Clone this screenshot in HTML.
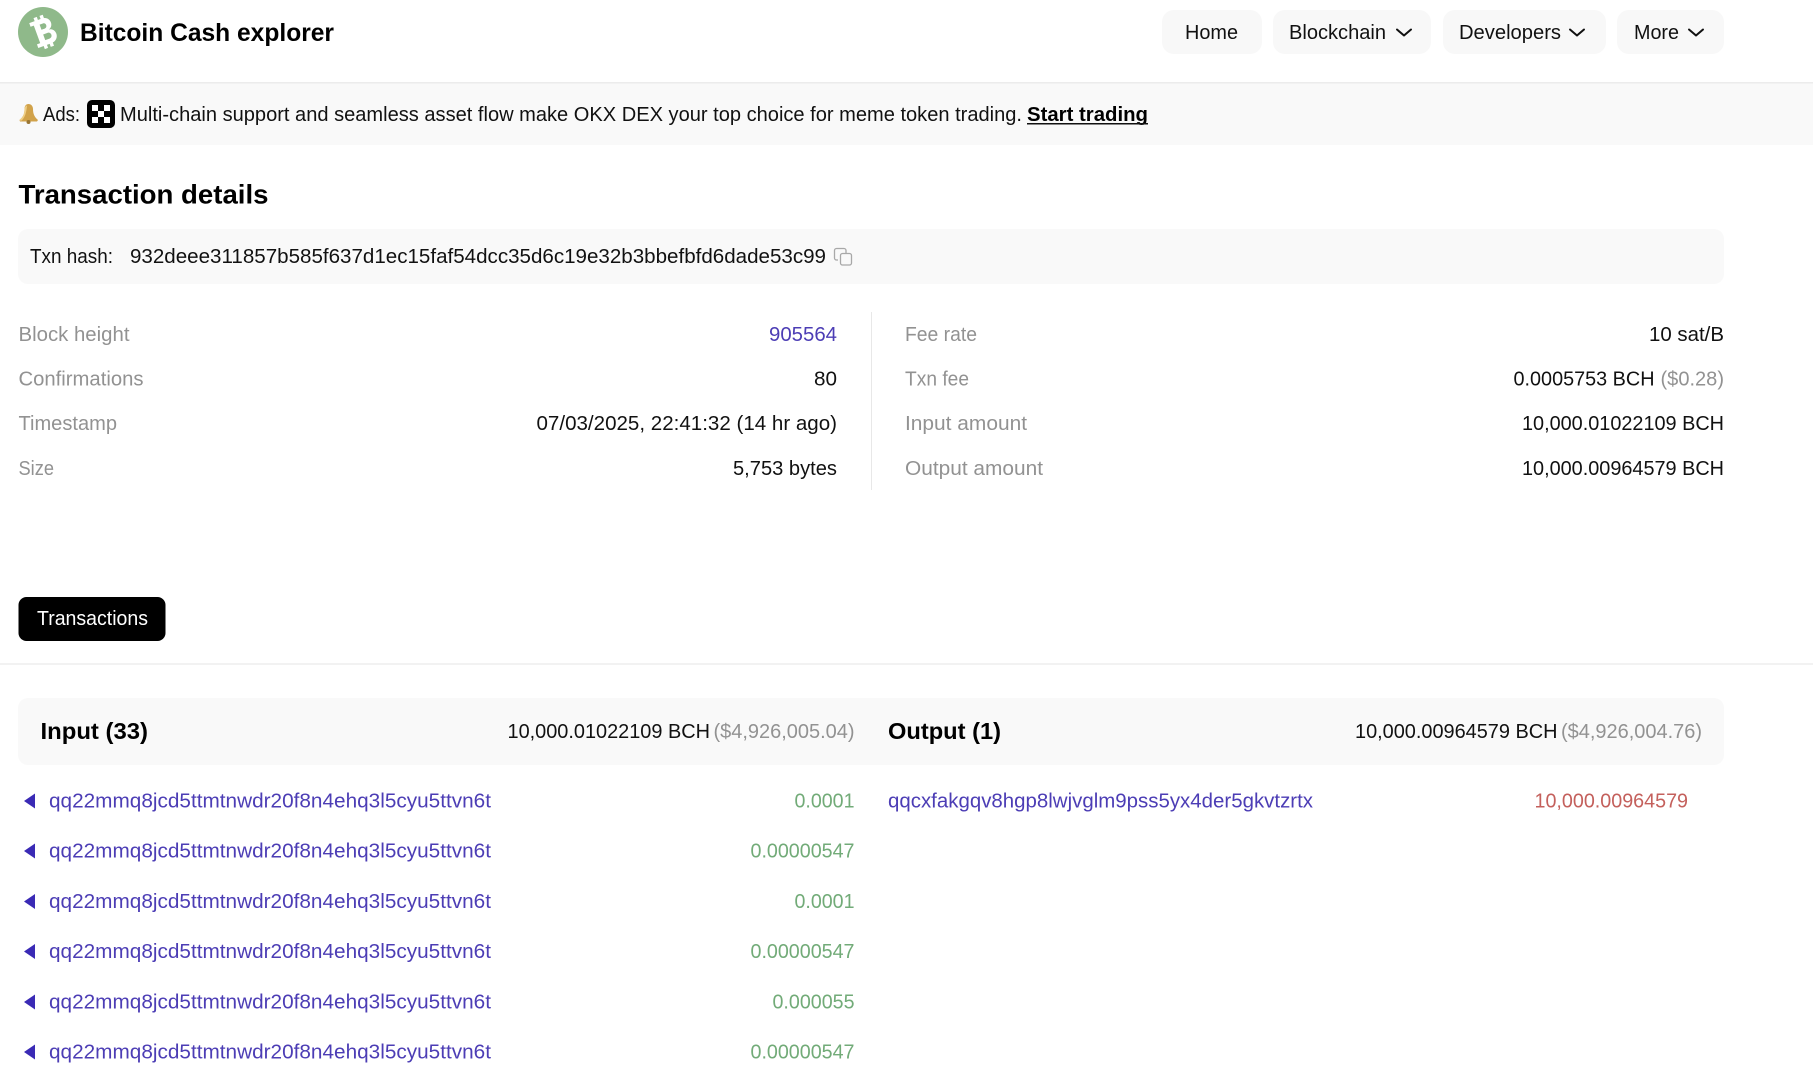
<!DOCTYPE html>
<html lang="en">
<head>
<meta charset="utf-8">
<title>Bitcoin Cash explorer</title>
<style>
html,body{margin:0;padding:0;background:#fff;width:1813px;height:1068px;overflow:hidden}
svg{display:block}
text{font-family:"Liberation Sans",sans-serif;font-size:20px;fill:#111}
.g{fill:#929292}
.l{fill:#4c3db5}
.u{fill:#72ab78}
.r{fill:#c4605c}
.b{font-weight:bold;fill:#000}
</style>
</head>
<body>
<svg width="1813" height="1068" viewBox="0 0 1813 1068" xmlns="http://www.w3.org/2000/svg">
<rect width="1813" height="1068" fill="#fff"/>

<!-- header -->
<circle cx="43" cy="32" r="25" fill="#8fb98a"/>
<g transform="translate(43.500 32) rotate(-20) scale(1.150 1.100)" fill="#fff">
<path fill-rule="evenodd" d="M-9-12H3C10-12 11-2 5-.5C12 0 12 12 3 12H-9V8.500H-6V-8.500H-9ZM-1-7.500V-2.500H2C5-2.500 5-7.500 2-7.500ZM-1 2V7.500H3C6.500 7.500 6.500 2 3 2Z"/>
<rect x="-4" y="-15" width="3" height="4"/><rect x="1.500" y="-15" width="3" height="4"/>
<rect x="-4" y="11" width="3" height="4"/><rect x="1.500" y="11" width="3" height="4"/>
</g>
<text x="80" y="41" class="b" style="font-size:25px" textLength="254" lengthAdjust="spacingAndGlyphs">Bitcoin Cash explorer</text>

<rect x="1162" y="10" width="100" height="44" rx="12" fill="#f8f8f8"/>
<rect x="1273" y="10" width="158" height="44" rx="12" fill="#f8f8f8"/>
<rect x="1443" y="10" width="163" height="44" rx="12" fill="#f8f8f8"/>
<rect x="1617" y="10" width="107" height="44" rx="12" fill="#f8f8f8"/>
<text x="1185" y="39" textLength="53" lengthAdjust="spacingAndGlyphs">Home</text>
<text x="1289" y="39" textLength="97" lengthAdjust="spacingAndGlyphs">Blockchain</text>
<text x="1459" y="39" textLength="102" lengthAdjust="spacingAndGlyphs">Developers</text>
<text x="1634" y="39" textLength="45" lengthAdjust="spacingAndGlyphs">More</text>
<g fill="none" stroke="#111" stroke-width="2" stroke-linecap="round" stroke-linejoin="round">
<path d="M1397 29.500L1404 35.500L1411 29.500"/>
<path d="M1570 29.500L1577 35.500L1584 29.500"/>
<path d="M1689 29.500L1696 35.500L1703 29.500"/>
</g>

<rect x="0" y="82" width="1813" height="1.500" fill="#ececec"/>
<rect x="0" y="83.500" width="1813" height="61.500" fill="#f9f9f9"/>

<!-- ads -->
<path d="M28.500 104C26 104 24.500 106 24.500 109C24.500 114 23 117 19.500 120L20 121.500H37L38 120C34.500 117 33 114 33 109C33 106 31 104 28.500 104Z" fill="#d1a24a"/>
<path d="M24.500 109C24.500 114 23 117 19.500 120L21 121C25 118 26.500 112 27 105.500C25.500 106 24.500 107.500 24.500 109Z" fill="#efcf86"/>
<circle cx="28.500" cy="122" r="2" fill="#9a7633"/>
<text x="43" y="121" textLength="37" lengthAdjust="spacingAndGlyphs">Ads:</text>
<rect x="87" y="100" width="28" height="28" rx="5" fill="#000"/>
<g fill="#fff">
<rect x="92" y="105" width="6" height="6"/><rect x="104" y="105" width="6" height="6"/>
<rect x="98" y="111" width="6" height="6"/>
<rect x="92" y="117" width="6" height="6"/><rect x="104" y="117" width="6" height="6"/>
</g>
<text x="120" y="121" textLength="902" lengthAdjust="spacingAndGlyphs">Multi-chain support and seamless asset flow make OKX DEX your top choice for meme token trading.</text>
<text x="1027" y="121" class="b" textLength="121" lengthAdjust="spacingAndGlyphs">Start trading</text>
<rect x="1027" y="123" width="121" height="1.500" fill="#111"/>

<!-- title -->
<text x="18.500" y="203.500" class="b" style="font-size:27px" textLength="250" lengthAdjust="spacingAndGlyphs">Transaction details</text>

<rect x="18" y="229" width="1706" height="55" rx="10" fill="#f9f9f9"/>
<text x="30" y="263" textLength="83" lengthAdjust="spacingAndGlyphs">Txn hash:</text>
<text x="130" y="263" textLength="696" lengthAdjust="spacingAndGlyphs">932deee311857b585f637d1ec15faf54dcc35d6c19e32b3bbefbfd6dade53c99</text>
<g fill="none" stroke="#a8a8a8" stroke-width="1.300">
<path d="M838 260H836.500A2 2 0 0 1 834.500 258V250.500A2 2 0 0 1 836.500 248.500H844A2 2 0 0 1 846 250.500V253"/>
<rect x="840.500" y="253.500" width="11" height="11.500" rx="2"/>
</g>

<!-- details -->
<rect x="871" y="312" width="1" height="178" fill="#e8e8e8"/>
<text x="18.500" y="341" class="g" textLength="111" lengthAdjust="spacingAndGlyphs">Block height</text>
<text x="18.500" y="385.500" class="g" textLength="125" lengthAdjust="spacingAndGlyphs">Confirmations</text>
<text x="18.500" y="430" class="g" textLength="98.500" lengthAdjust="spacingAndGlyphs">Timestamp</text>
<text x="18.500" y="475" class="g" textLength="35.500" lengthAdjust="spacingAndGlyphs">Size</text>
<text x="769" y="341" class="l" textLength="68" lengthAdjust="spacingAndGlyphs">905564</text>
<text x="814" y="385.500" textLength="23" lengthAdjust="spacingAndGlyphs">80</text>
<text x="536.500" y="430" textLength="300.500" lengthAdjust="spacingAndGlyphs">07/03/2025, 22:41:32 (14 hr ago)</text>
<text x="733" y="475" textLength="104" lengthAdjust="spacingAndGlyphs">5,753 bytes</text>

<text x="905" y="341" class="g" textLength="72" lengthAdjust="spacingAndGlyphs">Fee rate</text>
<text x="905" y="385.500" class="g" textLength="64" lengthAdjust="spacingAndGlyphs">Txn fee</text>
<text x="905" y="430" class="g" textLength="122" lengthAdjust="spacingAndGlyphs">Input amount</text>
<text x="905" y="475" class="g" textLength="138" lengthAdjust="spacingAndGlyphs">Output amount</text>
<text x="1649" y="341" textLength="75" lengthAdjust="spacingAndGlyphs">10 sat/B</text>
<text x="1513.500" y="385.500" textLength="141" lengthAdjust="spacingAndGlyphs">0.0005753 BCH</text>
<text x="1660.500" y="385.500" class="g" textLength="63.500" lengthAdjust="spacingAndGlyphs">($0.28)</text>
<text x="1522" y="430" textLength="202" lengthAdjust="spacingAndGlyphs">10,000.01022109 BCH</text>
<text x="1522" y="475" textLength="202" lengthAdjust="spacingAndGlyphs">10,000.00964579 BCH</text>

<!-- tabs -->
<rect x="18.500" y="597" width="147" height="44" rx="8" fill="#000"/>
<text x="37" y="625" style="fill:#fff" textLength="111" lengthAdjust="spacingAndGlyphs">Transactions</text>
<rect x="0" y="663.500" width="1813" height="1" fill="#e4e4e4"/>

<!-- io header -->
<rect x="18" y="698" width="1706" height="67" rx="10" fill="#f9f9f9"/>
<text x="40.500" y="739" class="b" style="font-size:23px" textLength="107.500" lengthAdjust="spacingAndGlyphs">Input (33)</text>
<text x="507.500" y="738" textLength="202.500" lengthAdjust="spacingAndGlyphs">10,000.01022109 BCH</text>
<text x="713.500" y="738" class="g" textLength="141" lengthAdjust="spacingAndGlyphs">($4,926,005.04)</text>
<text x="888" y="739" class="b" style="font-size:23px" textLength="113" lengthAdjust="spacingAndGlyphs">Output (1)</text>
<text x="1355" y="738" textLength="202.500" lengthAdjust="spacingAndGlyphs">10,000.00964579 BCH</text>
<text x="1561" y="738" class="g" textLength="141" lengthAdjust="spacingAndGlyphs">($4,926,004.76)</text>

<!-- rows -->
<g fill="#3a2ab5">
<path d="M24 801L35 793.500V808.500Z"/>
<path d="M24 851L35 843.500V858.500Z"/>
<path d="M24 901.500L35 894V909Z"/>
<path d="M24 951.500L35 944V959Z"/>
<path d="M24 1002L35 994.500V1009.500Z"/>
<path d="M24 1052L35 1044.500V1059.500Z"/>
</g>
<text x="49" y="807.500" class="l" textLength="442" lengthAdjust="spacingAndGlyphs">qq22mmq8jcd5ttmtnwdr20f8n4ehq3l5cyu5ttvn6t</text>
<text x="49" y="857.500" class="l" textLength="442" lengthAdjust="spacingAndGlyphs">qq22mmq8jcd5ttmtnwdr20f8n4ehq3l5cyu5ttvn6t</text>
<text x="49" y="908" class="l" textLength="442" lengthAdjust="spacingAndGlyphs">qq22mmq8jcd5ttmtnwdr20f8n4ehq3l5cyu5ttvn6t</text>
<text x="49" y="958" class="l" textLength="442" lengthAdjust="spacingAndGlyphs">qq22mmq8jcd5ttmtnwdr20f8n4ehq3l5cyu5ttvn6t</text>
<text x="49" y="1008.500" class="l" textLength="442" lengthAdjust="spacingAndGlyphs">qq22mmq8jcd5ttmtnwdr20f8n4ehq3l5cyu5ttvn6t</text>
<text x="49" y="1058.500" class="l" textLength="442" lengthAdjust="spacingAndGlyphs">qq22mmq8jcd5ttmtnwdr20f8n4ehq3l5cyu5ttvn6t</text>

<text x="794.500" y="807.500" class="u" textLength="60" lengthAdjust="spacingAndGlyphs">0.0001</text>
<text x="750.500" y="857.500" class="u" textLength="104" lengthAdjust="spacingAndGlyphs">0.00000547</text>
<text x="794.500" y="908" class="u" textLength="60" lengthAdjust="spacingAndGlyphs">0.0001</text>
<text x="750.500" y="958" class="u" textLength="104" lengthAdjust="spacingAndGlyphs">0.00000547</text>
<text x="772.500" y="1008.500" class="u" textLength="82" lengthAdjust="spacingAndGlyphs">0.000055</text>
<text x="750.500" y="1058.500" class="u" textLength="104" lengthAdjust="spacingAndGlyphs">0.00000547</text>

<text x="888" y="807.500" class="l" textLength="425" lengthAdjust="spacingAndGlyphs">qqcxfakgqv8hgp8lwjvglm9pss5yx4der5gkvtzrtx</text>
<text x="1534.500" y="807.500" class="r" textLength="153.500" lengthAdjust="spacingAndGlyphs">10,000.00964579</text>
</svg>
</body>
</html>
